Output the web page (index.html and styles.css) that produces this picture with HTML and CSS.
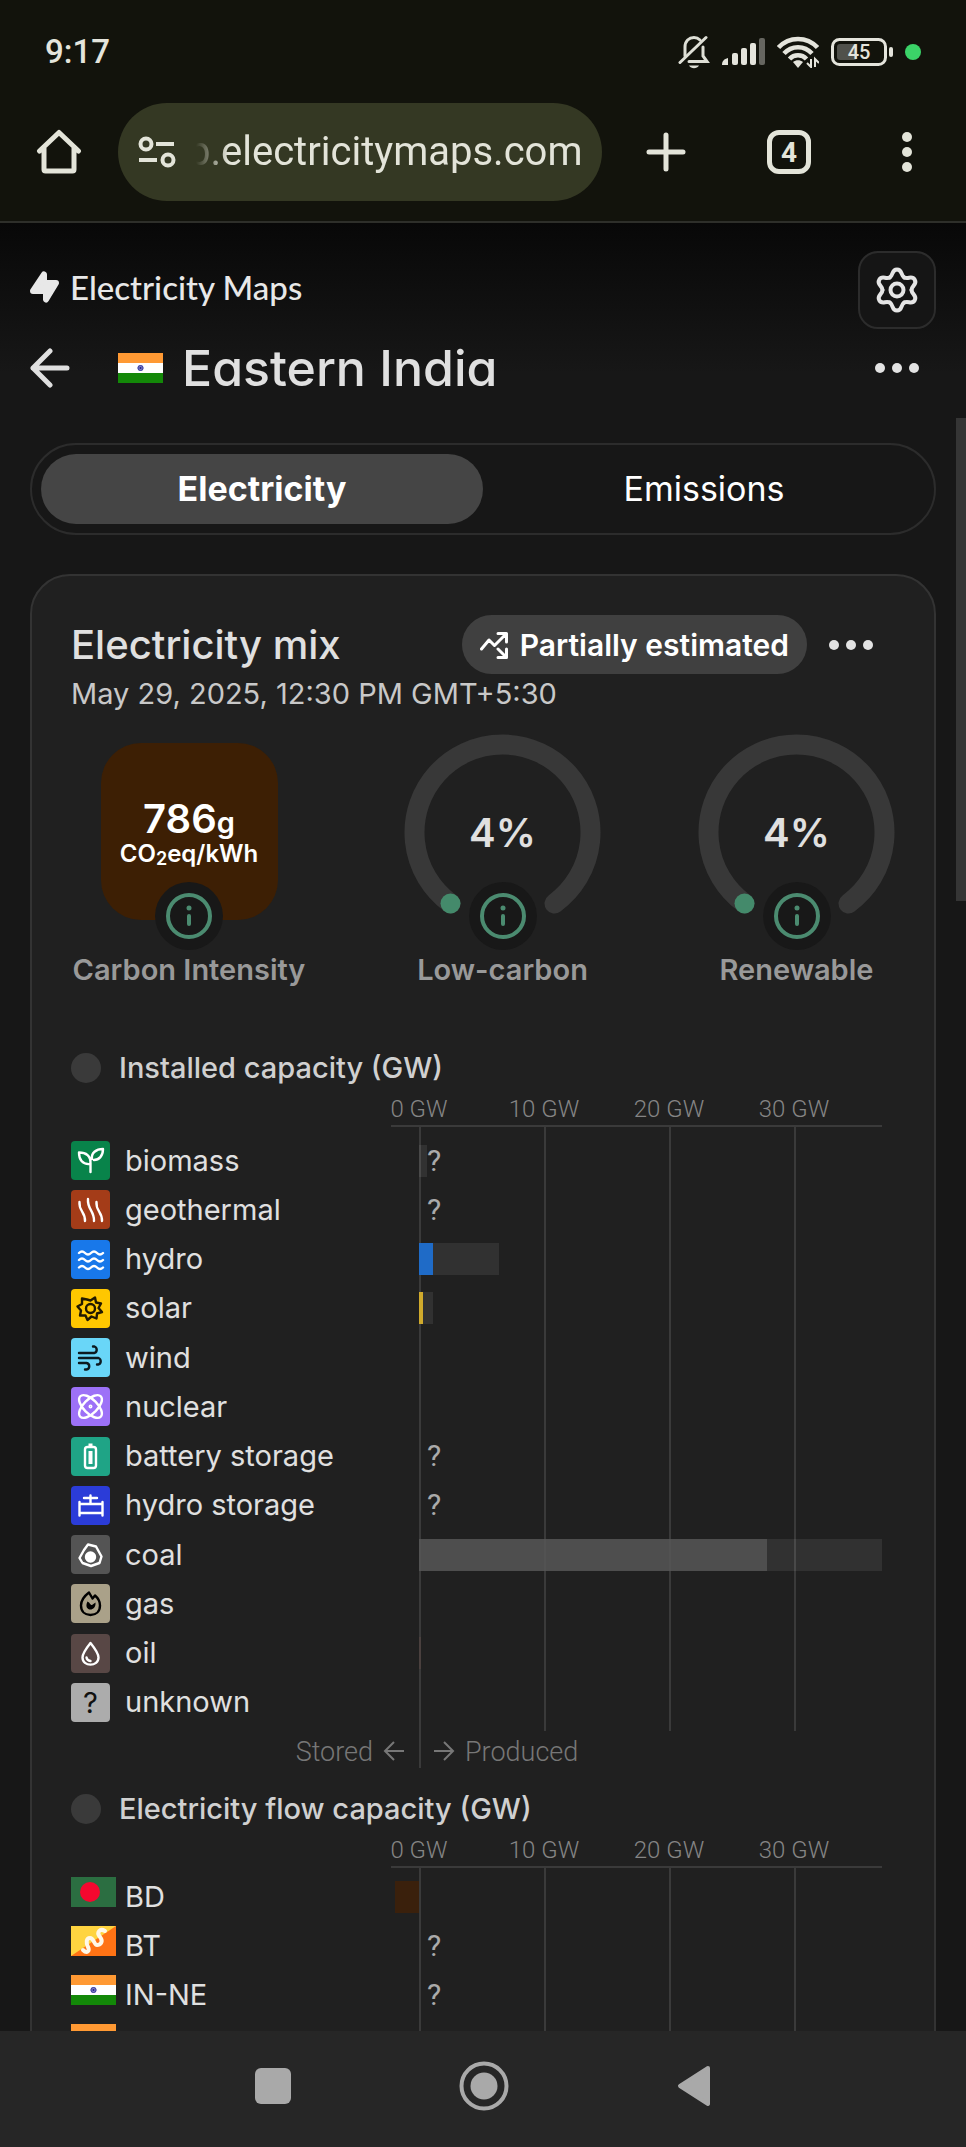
FILE: index.html
```html
<!DOCTYPE html>
<html lang="en">
<head>
    <meta charset="UTF-8">
    <meta name="viewport" content="width=device-width, initial-scale=1.0">
    <title>Eastern India | Electricity Maps</title>
    <link rel="stylesheet" href="styles.css">
</head>
<body>
    <!-- shared shapes -->
    <svg class="defs" width="0" height="0" aria-hidden="true">
        <symbol id="flag-in" viewBox="0 0 45 30">
            <rect width="45" height="10" fill="#f93"/>
            <rect y="10" width="45" height="10" fill="#fff"/>
            <rect y="20" width="45" height="10" fill="#138808"/>
            <circle cx="22.500" cy="15" r="3" fill="#8080c4"/>
            <circle cx="22.500" cy="15" r="2.500" fill="none" stroke="#4040a0"/>
            <circle cx="22.500" cy="15" r="1" fill="#20208c"/>
        </symbol>
        <symbol id="flag-bd" viewBox="0 0 45 30">
            <rect width="45" height="30" fill="#2b6e41"/>
            <circle cx="19" cy="15" r="10" fill="#f5082f"/>
        </symbol>
        <symbol id="flag-bt" viewBox="0 0 45 30">
            <rect width="45" height="30" fill="#ff7315"/>
            <path d="M0 0h45L0 30z" fill="#ffd440"/>
            <path d="M12 24c4 4 7 1 5-3s-2-9 2-9 4 7 7 7 7-3 3-8 0-9 5-6" fill="none" stroke="#fff8e8" stroke-width="4" stroke-linecap="round"/>
        </symbol>
        <symbol id="dots" viewBox="0 0 46 12">
            <circle cx="6" cy="6" r="5"/><circle cx="23" cy="6" r="5"/><circle cx="40" cy="6" r="5"/>
        </symbol>
        <symbol id="info" viewBox="0 0 46 46">
            <circle cx="23" cy="23" r="21" fill="none" stroke="currentColor" stroke-width="4"/>
            <circle cx="23" cy="15" r="2.500" fill="currentColor"/>
            <path d="M23 23v8" stroke="currentColor" stroke-width="4" stroke-linecap="round"/>
        </symbol>
        <symbol id="gauge" viewBox="0 0 197 197">
            <path d="M46.500 169.500A88 88 0 1 1 150.500 169.500" fill="none" stroke="#383838" stroke-width="20" stroke-linecap="round"/>
            <circle cx="46.500" cy="169.500" r="10" fill="#448a6b"/>
        </symbol>
        <path id="gear-tooth" d="M-7.250 -12.560C-3.400 -14.800 -5.600 -20.500 0 -20.500S3.400 -14.800 7.250 -12.560"/>
    </svg>

    <div class="app">
        <div class="status-bar">
            <span class="clock">9:17</span>
            <div class="status-icons">
                <svg width="32" height="34" viewBox="0 0 32 34" fill="none" stroke="#dedfd6" stroke-width="3" stroke-linecap="round">
                    <path d="M7 21V12c0-6 4-9.500 9-9.500 2.500 0 4.500 1 6 2.500M25 12v9l4 5.500H11"/>
                    <path d="M2 27.500L28 2.500"/>
                    <path d="M11 30.500h10c-2 3.500-8 3.500-10 0z" fill="#dedfd6" stroke="none"/>
                </svg>
                <svg width="43" height="28" viewBox="0 0 43 28" fill="#e4e4dc">
                    <path d="M0 27c0-4 2-6 6-7v7z"/>
                    <rect x="10" y="15" width="6" height="12" rx="2"/>
                    <rect x="19" y="10" width="6" height="17" rx="2"/>
                    <rect x="28" y="5" width="6" height="22" rx="2"/>
                    <rect x="37" y="0" width="6" height="27" rx="2" fill="#666660"/>
                </svg>
                <svg width="42" height="32" viewBox="0 0 42 32" fill="none" stroke="#e4e4dc" stroke-width="4.500">
                    <path d="M1.500 11.500C12 0 30 0 40.500 11.500"/>
                    <path d="M7 17.500c7.500-8.500 20.500-8.500 28 0"/>
                    <path d="M12.500 23c4.500-5 12.500-5 17 0"/>
                    <path d="M16 26c3-2.500 7-2.500 10 0l-5 6z" fill="#e4e4dc" stroke="none"/>
                    <path d="M34 23v8l-4-4M38 31v-8l4 4" stroke-width="2"/>
                </svg>
                <svg width="62" height="28" viewBox="0 0 62 28">
                    <rect x="1.500" y="1.500" width="53" height="25" rx="7" fill="none" stroke="#e4e4dc" stroke-width="3"/>
                    <rect x="6" y="6" width="20" height="16" rx="3" fill="#50514b"/>
                    <rect x="58" y="9" width="4" height="10" rx="2" fill="#e4e4dc"/>
                    <text class="battery-text" x="28" y="21" text-anchor="middle">45</text>
                </svg>
                <span class="mic-dot"></span>
            </div>
        </div>

        <div class="browser-bar">
            <button class="bar-btn" aria-label="Home">
                <svg width="46" height="46" viewBox="0 0 46 46" fill="none" stroke="#e3e4d9" stroke-width="5" stroke-linecap="round" stroke-linejoin="round">
                    <path d="M3.500 22L23 3.500 42.500 22M8 19v21.500q0 1.500 1.500 1.500h27q1.500 0 1.500-1.500V19"/>
                </svg>
            </button>
            <div class="url-pill">
                <svg width="38" height="32" viewBox="0 0 38 32" fill="none" stroke="#e3e4d9" stroke-width="4">
                    <circle cx="8" cy="8" r="5.500"/><path d="M18 8h18"/>
                    <circle cx="30" cy="24" r="5.500"/><path d="M1 24h18"/>
                </svg>
                <input class="url" type="text" value="p.electricitymaps.com" aria-label="Address">
            </div>
            <button class="bar-btn new-tab" aria-label="New tab">
                <svg width="40" height="40" viewBox="0 0 40 40" stroke="#e3e4d9" stroke-width="5" stroke-linecap="round">
                    <path d="M20 3v34M3 20h34"/>
                </svg>
            </button>
            <button class="bar-btn" aria-label="Tabs"><span class="tab-count">4</span></button>
            <button class="bar-btn" aria-label="More">
                <svg width="12" height="42" viewBox="0 0 12 42" fill="#e3e4d9">
                    <circle cx="6" cy="6" r="5"/><circle cx="6" cy="21" r="5"/><circle cx="6" cy="36" r="5"/>
                </svg>
            </button>
        </div>

        <main class="panel">
            <header class="site-header">
                <a class="logo" href="#">
                    <svg width="29" height="32" viewBox="0 0 29 32" fill="#e8e8e8" stroke="#e8e8e8" stroke-width="6" stroke-linejoin="round">
                        <path d="M14 3.500v8.500h12L16 28.500V20H3z"/>
                    </svg>
                    Electricity Maps
                </a>
                <button class="settings" aria-label="Settings">
                    <svg width="48" height="48" viewBox="-24 -24 48 48" fill="none" stroke="#e5e5e5" stroke-width="4" stroke-linecap="round">
                        <use href="#gear-tooth"/>
                        <use href="#gear-tooth" transform="rotate(60)"/>
                        <use href="#gear-tooth" transform="rotate(120)"/>
                        <use href="#gear-tooth" transform="rotate(180)"/>
                        <use href="#gear-tooth" transform="rotate(240)"/>
                        <use href="#gear-tooth" transform="rotate(300)"/>
                        <circle r="6.500"/>
                    </svg>
                </button>
            </header>

            <div class="zone-header">
                <button class="back" aria-label="Back">
                    <svg width="40" height="40" viewBox="0 0 40 40" fill="none" stroke="#e0e0e0" stroke-width="5" stroke-linecap="round" stroke-linejoin="round">
                        <path d="M37 20H3M20 3L3 20l17 17"/>
                    </svg>
                </button>
                <svg class="flag" width="45" height="30"><use href="#flag-in"/></svg>
                <h1>Eastern India</h1>
                <button class="more" aria-label="More options"><svg width="46" height="12" fill="#e3e3e3"><use href="#dots"/></svg></button>
            </div>

            <div class="tabs">
                <button class="tab active">Electricity</button>
                <button class="tab">Emissions</button>
            </div>

            <section class="card">
                <div class="card-header">
                    <h2>Electricity mix</h2>
                    <span class="badge">
                        <svg width="28" height="28" viewBox="0 0 28 28" fill="none" stroke="#fff" stroke-width="3" stroke-linecap="round" stroke-linejoin="round">
                            <path d="M1.500 18L9 9l5.500 5.500L26 3M18 2.500h8.500V11M18 18l8 8M26.500 18v8.500H18"/>
                        </svg>
                        Partially estimated
                    </span>
                    <button class="more" aria-label="Chart options"><svg width="46" height="12" fill="#e3e3e3"><use href="#dots"/></svg></button>
                </div>
                <p class="date">May 29, 2025, 12:30 PM GMT+5:30</p>

                <div class="gauges">
                    <div class="gauge">
                        <div class="gauge-top">
                            <div class="intensity">
                                <span class="value">786<small>g</small></span>
                                <span class="unit">CO<sub>2</sub>eq/kWh</span>
                            </div>
                            <button class="info" aria-label="About carbon intensity"><svg width="46" height="46"><use href="#info"/></svg></button>
                        </div>
                        <p>Carbon Intensity</p>
                    </div>
                    <div class="gauge">
                        <div class="gauge-top">
                            <div class="ring">
                                <svg width="197" height="197"><use href="#gauge"/></svg>
                                <span class="percent">4%</span>
                            </div>
                            <button class="info" aria-label="About low-carbon"><svg width="46" height="46"><use href="#info"/></svg></button>
                        </div>
                        <p>Low-carbon</p>
                    </div>
                    <div class="gauge">
                        <div class="gauge-top">
                            <div class="ring">
                                <svg width="197" height="197"><use href="#gauge"/></svg>
                                <span class="percent">4%</span>
                            </div>
                            <button class="info" aria-label="About renewable"><svg width="46" height="46"><use href="#info"/></svg></button>
                        </div>
                        <p>Renewable</p>
                    </div>
                </div>

                <h3>Installed capacity (GW)</h3>
                <div class="chart">
                    <div class="axis"><span>0 GW</span><span>10 GW</span><span>20 GW</span><span>30 GW</span></div>
                    <div class="rows production">
                        <div class="lines"><i></i><i></i><i></i><i></i></div>
                        <div class="row">
                            <svg class="icon biomass" viewBox="0 0 39 39"><path d="M19.500 31V22M19.500 23C11 24 8 18 8 11.500c7 0 12 3 11.500 11.500zM21 18c-1-6 4-10 11-10 0 7-4 11-9 11"/></svg>
                            <span class="name">biomass</span>
                            <div class="bars"><div class="capacity" style="width: 1.700%"></div><span class="missing">?</span></div>
                        </div>
                        <div class="row">
                            <svg class="icon geothermal" viewBox="0 0 39 39"><path d="M8.500 12c-1 9 6 10 5.500 19M17 9c-1 10 6.500 12 6 22M25.500 12c-1 9 6 10 5.500 19"/></svg>
                            <span class="name">geothermal</span>
                            <div class="bars"><span class="missing">?</span></div>
                        </div>
                        <div class="row">
                            <svg class="icon hydro" viewBox="0 0 39 39"><path d="M8 13q3-3 6 0t6 0 6 0 6 0M8 20q3-3 6 0t6 0 6 0 6 0M8 27.500q3-3 6 0t6 0 6 0 6 0"/></svg>
                            <span class="name">hydro</span>
                            <div class="bars"><div class="capacity" style="width: 17.200%"></div><div class="produced hydro" style="width: 3%"></div></div>
                        </div>
                        <div class="row">
                            <svg class="icon solar" viewBox="0 0 39 39"><path d="M19.500 11.500L24 8.500l1 5 5 1-2.500 4.500 3.500 4-5 1.500-.5 5-5-2-4 3.500-2-4.500-5.500 0 1-5-3.500-4 4.500-2.500 0-5.500 5 1z"/><circle cx="19.500" cy="19.500" r="4.500"/></svg>
                            <span class="name">solar</span>
                            <div class="bars"><div class="capacity" style="width: 3%"></div><div class="produced solar" style="width: 0.800%"></div></div>
                        </div>
                        <div class="row">
                            <svg class="icon wind" viewBox="0 0 39 39"><path d="M8 15h15.500a3.500 3.500 0 0 0 0-6.500H22M8 20h19.500a3.500 3.500 0 0 1 0 6.500H26M8 25h7.500a3.300 3.300 0 0 1 0 6.500H14"/></svg>
                            <span class="name">wind</span>
                            <div class="bars"></div>
                        </div>
                        <div class="row">
                            <svg class="icon nuclear" viewBox="0 0 39 39"><ellipse cx="19.500" cy="19.500" rx="14.500" ry="7" transform="rotate(45 19.500 19.500)"/><ellipse cx="19.500" cy="19.500" rx="14.500" ry="7" transform="rotate(-45 19.500 19.500)"/><circle cx="19.500" cy="19.500" r=".8"/></svg>
                            <span class="name">nuclear</span>
                            <div class="bars"></div>
                        </div>
                        <div class="row">
                            <svg class="icon battery" viewBox="0 0 39 39"><rect x="14" y="10" width="11" height="21" rx="2.500"/><path d="M17.500 8.500h4M19.500 14v13" stroke-width="4" stroke-linecap="butt"/></svg>
                            <span class="name">battery storage</span>
                            <div class="bars"><span class="missing">?</span></div>
                        </div>
                        <div class="row">
                            <svg class="icon hydro-storage" viewBox="0 0 39 39"><path d="M8.500 16v13.500M31.500 16v13.500M8.500 18h23M8.500 27h23M19.500 9.500V18M13 12h13"/></svg>
                            <span class="name">hydro storage</span>
                            <div class="bars"><span class="missing">?</span></div>
                        </div>
                        <div class="row">
                            <svg class="icon coal" viewBox="0 0 39 39"><path d="M17 9.500l8 2 5.500 10-2 6.500-8.500 3-8.500-3L8.500 23 13 15z"/><circle cx="19.500" cy="22" r="4.500" fill="#fff"/></svg>
                            <span class="name">coal</span>
                            <div class="bars"><div class="capacity" style="width: 100%"></div><div class="produced coal" style="width: 75.200%"></div></div>
                        </div>
                        <div class="row">
                            <svg class="icon gas" viewBox="0 0 39 39"><path d="M18 8.500c-4 3-8 7.500-8 13 0 6 4 9.500 9.500 9.500s9.500-3.500 9.500-9.500c0-4-2-7.500-5-10l-2.500 3z"/><path class="ember" d="M16.500 17.500c-5 10 9 11 8 1l-3.500 2.500c-2 0-2-2.500-4.500-3.500z"/></svg>
                            <span class="name">gas</span>
                            <div class="bars"></div>
                        </div>
                        <div class="row">
                            <svg class="icon oil" viewBox="0 0 39 39"><path d="M19.500 9c-4 5-8 10-8 14.500 0 9.500 16 9.500 16 0 0-4.500-4-9.500-8-14.500z"/><path d="M15.500 23.500q.5 3 4 3.500"/></svg>
                            <span class="name">oil</span>
                            <div class="bars"><div class="produced oil" style="width: 0.400%"></div></div>
                        </div>
                        <div class="row">
                            <span class="icon unknown">?</span>
                            <span class="name">unknown</span>
                            <div class="bars"></div>
                        </div>
                    </div>
                    <div class="direction">
                        <span class="stored">Stored
                            <svg width="22" height="22" viewBox="0 0 22 22"><path d="M21 10H2M11 1L2 10l9 9"/></svg>
                        </span>
                        <span class="produced-label">
                            <svg width="22" height="22" viewBox="0 0 22 22"><path d="M1 10h19M11 1l9 9-9 9"/></svg>
                            Produced
                        </span>
                    </div>
                </div>

                <h3>Electricity flow capacity (GW)</h3>
                <div class="chart">
                    <div class="axis"><span>0 GW</span><span>10 GW</span><span>20 GW</span><span>30 GW</span></div>
                    <div class="rows exchange">
                        <div class="lines"><i></i><i></i><i></i><i></i></div>
                        <div class="row">
                            <svg class="flag" width="45" height="30"><use href="#flag-bd"/></svg>
                            <span class="name">BD</span>
                            <div class="bars"><div class="exported" style="width: 5.200%"></div></div>
                        </div>
                        <div class="row">
                            <svg class="flag" width="45" height="30"><use href="#flag-bt"/></svg>
                            <span class="name">BT</span>
                            <div class="bars"><span class="missing">?</span></div>
                        </div>
                        <div class="row">
                            <svg class="flag" width="45" height="30"><use href="#flag-in"/></svg>
                            <span class="name">IN-NE</span>
                            <div class="bars"><span class="missing">?</span></div>
                        </div>
                        <div class="row">
                            <svg class="flag" width="45" height="30"><use href="#flag-in"/></svg>
                        </div>
                    </div>
                </div>
            </section>
            <div class="scroll-thumb"></div>
        </main>

        <nav class="nav-bar">
            <button aria-label="Recent apps"><svg width="36" height="36"><rect width="36" height="36" rx="6" fill="#a9a9a9"/></svg></button>
            <button aria-label="Home screen"><svg width="50" height="50" viewBox="0 0 50 50"><circle cx="25" cy="25" r="22.500" fill="none" stroke="#a9a9a9" stroke-width="4"/><circle cx="25" cy="25" r="13.500" fill="#a9a9a9"/></svg></button>
            <button aria-label="Go back"><svg width="34" height="42" viewBox="0 0 34 42" fill="#a9a9a9" stroke="#a9a9a9" stroke-width="4" stroke-linejoin="round"><path d="M31 3L3 21l28 18z"/></svg></button>
        </nav>
    </div>
</body>
</html>
```
FILE: styles.css
```css
* {
    box-sizing: border-box;
}
body {
    margin: 0;
    background: #171717;
    color: #e0e0e0;
    font-family: Inter, "Liberation Sans", sans-serif;
    font-size: 29px;
    line-height: 40px;
}
h1, h2, h3, p {
    margin: 0;
}
button {
    padding: 0;
    border: none;
    background: none;
    color: inherit;
    font: inherit;
    cursor: pointer;
}
svg {
    display: block;
    flex: none;
}
.defs {
    position: absolute;
}
.app {
    display: flex;
    flex-direction: column;
    height: 100vh;
}

/* phone status bar */
.status-bar {
    display: flex;
    justify-content: space-between;
    align-items: center;
    height: 103px;
    padding: 0 45px;
    background: #12130c;
}
.clock {
    color: #e4e4dc;
    font: 500 33px/40px Roboto, sans-serif;
}
.status-icons {
    display: flex;
    align-items: center;
    gap: 12px;
}
.battery-text {
    fill: #e4e4dc;
    font: 500 20px Roboto, sans-serif;
}
.mic-dot {
    width: 16px;
    height: 16px;
    border-radius: 50%;
    background: #3bd368;
}

/* browser toolbar */
.browser-bar {
    display: flex;
    height: 120px;
    background: #12130c;
    border-bottom: 2px solid #2e2f2a;
}
.bar-btn {
    display: flex;
    justify-content: center;
    align-items: center;
    width: 118px;
    height: 98px;
}
.new-tab {
    width: 128px;
}
.url-pill {
    display: flex;
    flex: 1;
    align-items: center;
    gap: 12px;
    min-width: 0;
    height: 98px;
    padding: 0 22px 0 20px;
    border-radius: 49px;
    background: #343823;
}
.url {
    flex: 1;
    min-width: 0;
    padding: 0;
    border: none;
    outline: none;
    background: none;
    color: #e3e4d9;
    font: 40px/48px Roboto, sans-serif;
    text-align: right;
    -webkit-mask-image: linear-gradient(90deg, transparent 8px, #000 40px);
    mask-image: linear-gradient(90deg, transparent 8px, #000 40px);
}
.tab-count {
    width: 44px;
    height: 44px;
    border: 5px solid #e3e4d9;
    border-radius: 12px;
    color: #e3e4d9;
    font: 700 28px/35px Roboto, sans-serif;
}

/* page */
.panel {
    position: relative;
    display: flex;
    flex-direction: column;
    flex: 1;
    min-height: 0;
    overflow: hidden;
    padding: 28px 30px 0;
    background: linear-gradient(#080808, #171717 150px);
}
.site-header {
    display: flex;
    justify-content: space-between;
    align-items: center;
}
.logo {
    display: flex;
    align-items: center;
    gap: 11px;
    padding-bottom: 6px;
    color: #e8e8e8;
    font: 500 33px/40px Lato, sans-serif;
    text-decoration: none;
}
.settings {
    display: flex;
    justify-content: center;
    align-items: center;
    width: 78px;
    height: 78px;
    border: 2px solid #2c2c2c;
    border-radius: 20px;
    background: #151515;
}
.zone-header {
    display: flex;
    align-items: center;
    margin-top: 9px;
}
.back {
    margin-right: 48px;
}
h1 {
    margin-left: 19px;
    font-size: 50px;
    font-weight: 500;
    line-height: 60px;
    font-feature-settings: "cv11";
}
.zone-header .more {
    margin: 0 16px 0 auto;
}
.tabs {
    display: flex;
    flex: none;
    margin-top: 45px;
    padding: 9px;
    border: 2px solid #2c2c2c;
    border-radius: 46px;
}
.tab {
    flex: 1;
    height: 70px;
    border-radius: 35px;
    color: #fff;
    font-size: 34px;
}
.tab.active {
    background: #454545;
    font-weight: 700;
}
.scroll-thumb {
    position: absolute;
    top: 195px;
    right: 0;
    width: 10px;
    height: 483px;
    background: #353535;
}

/* electricity mix card */
.card {
    flex: none;
    margin-top: 39px;
    padding: 39px 39px 0;
    border: 2px solid #333;
    border-radius: 40px;
    background: #202020;
}
.card-header {
    display: flex;
    align-items: center;
    height: 59px;
}
h2 {
    font-size: 40px;
    font-weight: 500;
}
.badge {
    display: flex;
    align-items: center;
    gap: 12px;
    height: 59px;
    margin-left: auto;
    padding: 0 18px;
    border-radius: 30px;
    background: #404040;
    color: #fff;
    font-size: 30px;
    font-weight: 600;
}
.card-header .more {
    margin: 0 21px;
}
.date {
    color: #c8c8c8;
}
.gauges {
    display: flex;
    justify-content: space-between;
    margin-top: 20px;
}
.gauge:first-child {
    min-width: 236px;
}
.gauge p {
    color: #999;
    font-weight: 600;
    text-align: center;
}
.gauge-top {
    position: relative;
    display: flex;
    justify-content: center;
    min-width: 197px;
    height: 216px;
}
.intensity {
    display: flex;
    flex-direction: column;
    justify-content: center;
    align-items: center;
    width: 177px;
    height: 177px;
    margin-top: 9px;
    padding-top: 4px;
    border-radius: 40px;
    background: #3d1f04;
    color: #fff;
    font-weight: 600;
}
.value {
    font-size: 40px;
}
.value small {
    font-size: 29px;
    line-height: 0;
}
.unit {
    font-size: 24px;
    line-height: 30px;
}
.unit sub {
    font-size: 18px;
    line-height: 0;
    vertical-align: -3px;
}
.ring {
    display: grid;
    place-items: center;
    height: 197px;
}
.ring > * {
    grid-area: 1 / 1;
}
.percent {
    font-size: 40px;
    font-weight: 600;
}
.info {
    position: absolute;
    bottom: 0;
    left: 50%;
    display: flex;
    justify-content: center;
    align-items: center;
    width: 68px;
    height: 68px;
    margin-left: -34px;
    border-radius: 50%;
    background: #181818;
    color: #4b8b70;
}

/* bar charts */
h3 {
    display: flex;
    align-items: center;
    gap: 18px;
    margin-top: 60px;
    color: #d0d0d0;
    font-size: 29px;
    font-weight: 500;
    line-height: 36px;
}
h3::before {
    content: "";
    width: 30px;
    height: 30px;
    border-radius: 50%;
    background: #3a3a3a;
}
.chart {
    margin-right: 13px;
}
.chart + h3 {
    margin-top: 23px;
}
.axis {
    display: grid;
    grid-template-columns: 27% 27% 27% 19%;
    height: 41px;
    margin-left: 320px;
    padding-left: 28px;
    border-bottom: 2px solid #3a3a3a;
    color: #858585;
    font: 300 24px/46px Roboto, sans-serif;
}
.axis span {
    width: 100px;
    margin-left: -50px;
    text-align: center;
}
.rows {
    position: relative;
    display: flex;
    flex-direction: column;
}
.production {
    height: 604px;
    padding: 9px 0 4px;
}
.exchange {
    height: 201px;
    padding-top: 4px;
}
.lines {
    position: absolute;
    inset: 0 0 0 348px;
    display: grid;
    grid-template-columns: 27% 27% 27% 19%;
}
.lines i {
    border-left: 2px solid #3a3a3a;
}
.row {
    position: relative;
    display: flex;
    flex: 1;
    align-items: center;
}
.icon {
    width: 39px;
    height: 39px;
    border-radius: 4px;
    fill: none;
    stroke: #fff;
    stroke-width: 2.4;
    stroke-linecap: round;
    stroke-linejoin: round;
}
.row .flag {
    margin-bottom: 10px;
}
.name {
    width: 309px;
    padding-left: 15px;
}
.exchange .name {
    width: 303px;
    padding-left: 9px;
}
.bars {
    position: relative;
    display: grid;
    flex: 1;
    height: 32px;
    align-items: center;
}
.bars > * {
    grid-area: 1 / 1;
}
.capacity, .produced {
    height: 32px;
}
.capacity {
    background: rgba(255, 255, 255, 0.08);
}
.missing {
    padding-left: 8px;
    color: #aaa;
    font: 30px/32px Roboto, sans-serif;
}
.exported {
    position: absolute;
    right: 100%;
    height: 32px;
    background: #3a200c;
}

.icon.biomass { background: #08834a; }
.icon.geothermal { background: #a43c18; }
.icon.hydro { background: #1878ea; }
.icon.solar { background: #ffc700; stroke: #221a00; }
.icon.wind { background: #69d6f8; stroke: #0c1a20; }
.icon.nuclear { background: #9d71f7; }
.icon.battery { background: #1fa486; }
.icon.hydro-storage { background: #2b3cd8; }
.icon.coal { background: #545454; }
.icon.gas { background: #aaa189; stroke: #000; }
.icon.oil { background: #584745; }
.icon.unknown {
    background: #acacac;
    color: #111;
    line-height: 39px;
    text-align: center;
}
.ember {
    fill: #000;
    stroke: none;
}
.produced.hydro { background: #1f6bc7; }
.produced.solar { background: #d0aa2c; }
.produced.coal { background: rgba(84, 84, 84, 0.85); }
.produced.oil { background: #4a403e; }

.direction {
    display: grid;
    grid-template-columns: 348px 1fr;
    height: 37px;
    color: #777;
    font: 300 27px/32px Roboto, sans-serif;
}
.direction span {
    display: flex;
    align-items: center;
    gap: 10px;
    padding-top: 5px;
}
.direction svg {
    fill: none;
    stroke: #777;
    stroke-width: 2;
}
.direction .stored {
    justify-content: flex-end;
    padding-right: 14px;
}
.direction .produced-label {
    padding-left: 12px;
    border-left: 2px solid #3a3a3a;
}

/* phone navigation */
.nav-bar {
    display: flex;
    justify-content: center;
    align-items: center;
    gap: 168px;
    flex: none;
    height: 116px;
    padding-bottom: 6px;
    background: #262626;
}
```
